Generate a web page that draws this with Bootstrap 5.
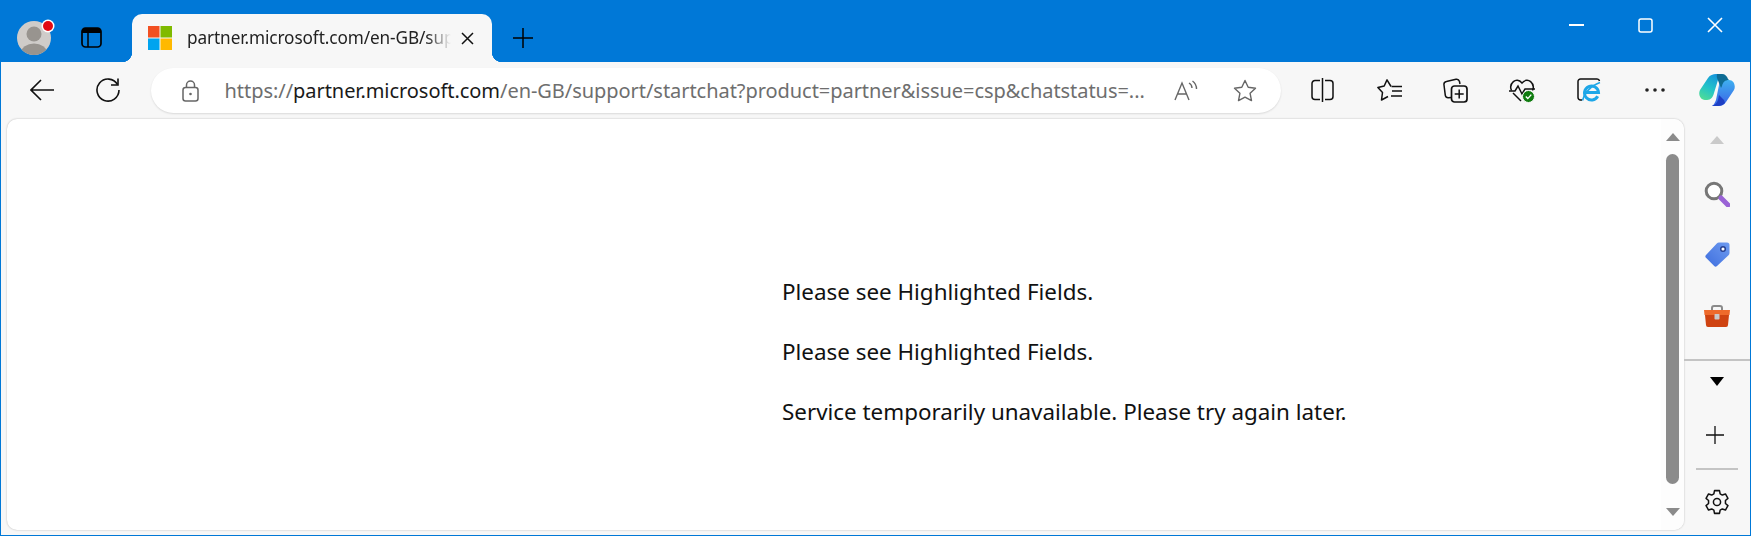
<!DOCTYPE html>
<html lang="en">
<head>
  <meta charset="UTF-8">
  <title>partner.microsoft.com</title>
  <link href="https://cdn.jsdelivr.net/npm/bootstrap@5.3.0/dist/css/bootstrap.min.css" rel="stylesheet">
  <style>
    html, body { height: 100%; background: #0078d7; overflow: hidden; }
    body { font-family: "Noto Sans", "Liberation Sans", sans-serif; color: #111; }
    svg { display: block; flex: none; }
    .browser-win { height: 536px; padding: 0 1px 1px 1px; }
    .tab-strip { height: 62px; flex: none; }
    .strip-left { width: 131px; padding: 0 0 0 16px; }
    .avatar-wrap { width: 42px; padding-top: 17px; }
    .tabs-btn { margin: 27px 0 0 22px; }
    .page-tab { position: relative; width: 360px; height: 48px; margin-top: 14px; background: #f7f7f7; border-radius: 10px 10px 0 0; padding-left: 16px; }
    .page-tab::before, .page-tab::after { content: ""; position: absolute; bottom: 0; width: 10px; height: 10px; }
    .page-tab::before { left: -10px; background: radial-gradient(circle at 0 0, #0078d7 10px, #f7f7f7 10.5px); }
    .page-tab::after { right: -10px; background: radial-gradient(circle at 100% 0, #0078d7 10px, #f7f7f7 10.5px); }
    .tab-title { width: 268px; margin-left: 15px; font-size: 17.2px; white-space: nowrap; color: #222; letter-spacing: -.1px;
      -webkit-mask-image: linear-gradient(to right, #000 240px, transparent 264px); mask-image: linear-gradient(to right, #000 240px, transparent 264px); }
    .tab-close { margin-left: 6px; }
    .new-tab { margin-left: 21px; margin-top: 14px; height: 48px; }
    .win-controls { margin-left: auto; height: 50px; }
    .win-btn { width: 69.5px; }
    .tool-bar { height: 56px; flex: none; background: #f7f7f7; padding-left: 8px; }
    .nav-slot { width: 66px; height: 56px; }
    .addr-bar { width: 1130px; height: 45px; margin-left: 10px; margin-top: 6px; margin-right: 8.5px; background: #fff; border-radius: 23px; box-shadow: 0 1px 2px rgba(0,0,0,.12); padding-left: 30.5px; }
    .addr-url { margin-left: 26px; width: 930px; font-size: 20px; white-space: nowrap; color: #6e6e6e; letter-spacing: -.05px; }
    .addr-url b { font-weight: 400; color: #1a1a1a; }
    .addr-read { margin-left: 19.5px; }
    .addr-star { margin-left: 33.5px; }
    .tool-slot { width: 66.5px; height: 56px; }
    .tool-slot-end { width: 56.5px; height: 56px; }
    .main-area { flex: 1 1 0; min-height: 0; background: #f7f7f7; }
    .page-pane { width: 1677px; margin: 1px 0 5px 6px; background: #fff; border-radius: 10px; box-shadow: 0 0 2px rgba(0,0,0,.28); }
    .page-body { padding: 143px 0 0 775px; font-size: 22.4px; color: #111; }
    .page-body p { margin: 0; line-height: 60px; }
    .scroll-col { width: 23px; padding: 14px 0 14px 0; background: #fdfdfd; border-radius: 0 10px 10px 0; }
    .scroll-thumb { width: 13px; flex: 1 1 0; margin: 13px 0 24px; background: #8b8b8b; border-radius: 7px; }
    .arr-up { width: 0; height: 0; border: 7.5px solid transparent; border-top: 0; border-bottom: 8px solid #8b8b8b; }
    .arr-down { width: 0; height: 0; border: 7.5px solid transparent; border-bottom: 0; border-top: 8px solid #8b8b8b; }
    .side-rail { width: 66px; }
    .rail-up { width: 0; height: 0; margin: 18px 0 19px; border: 7px solid transparent; border-top: 0; border-bottom: 8px solid #cacaca; }
    .rail-item { height: 61px; }
    .rail-line { height: 2px; background: #c4c4c4; align-self: stretch; margin-top: 13px; }
    .rail-down { width: 0; height: 0; margin: 16px 0 40px; border: 7px solid transparent; border-bottom: 0; border-top: 9px solid #000; }
    .rail-line-sm { height: 2px; width: 42px; background: #c4c4c4; margin: 24px 0 19px; }
  </style>
</head>
<body>
<div class="browser-win d-flex flex-column">

  <div class="tab-strip d-flex">
    <div class="strip-left d-flex">
      <div class="avatar-wrap">
        <svg width="42" height="40" viewBox="0 0 42 40">
          <defs><clipPath id="avClip"><circle cx="17" cy="21" r="17"/></clipPath></defs>
          <circle cx="17" cy="21" r="17" fill="#cfccc9"/>
          <g clip-path="url(#avClip)" fill="#98948f">
            <circle cx="17" cy="17" r="7.500"/>
            <ellipse cx="17" cy="36" rx="13" ry="9.500"/>
          </g>
          <circle cx="31" cy="9" r="6.500" fill="#fff"/>
          <circle cx="31" cy="9" r="5" fill="#e20a12"/>
        </svg>
      </div>
      <div class="tabs-btn">
        <svg width="21" height="21" viewBox="0 0 21 21"><rect x="1" y="1" width="19" height="19" rx="3.500" fill="none" stroke="#000" stroke-width="1.700"/><path d="M1 6V4.500A3.500 3.500 0 0 1 4.500 1h12A3.500 3.500 0 0 1 20 4.500V6z" fill="#000"/><path d="M7 6v14" stroke="#000" stroke-width="1.500"/></svg>
      </div>
    </div>
    <div class="page-tab d-flex align-items-center">
      <svg width="24" height="24" viewBox="0 0 24 24"><rect width="11.500" height="11.500" fill="#f25022"/><rect x="12.500" width="11.500" height="11.500" fill="#7fba00"/><rect y="12.500" width="11.500" height="11.500" fill="#00a4ef"/><rect x="12.500" y="12.500" width="11.500" height="11.500" fill="#ffb900"/></svg>
      <div class="tab-title">partner.microsoft.com/en-GB/sup</div>
      <svg class="tab-close" width="13" height="13" viewBox="0 0 13 13"><path d="M1 1l11 11M12 1L1 12" stroke="#111" stroke-width="1.500"/></svg>
    </div>
    <div class="new-tab d-flex align-items-center">
      <svg width="20" height="20" viewBox="0 0 20 20"><path d="M10 0v20M0 10h20" stroke="#000" stroke-width="1.500"/></svg>
    </div>
    <div class="win-controls d-flex">
      <div class="win-btn d-flex align-items-center justify-content-center"><svg width="15" height="2"><rect width="15" height="2" fill="#fff"/></svg></div>
      <div class="win-btn d-flex align-items-center justify-content-center"><svg width="15" height="15" viewBox="0 0 15 15"><rect x="1" y="1" width="13" height="13" rx="2" fill="none" stroke="#fff" stroke-width="1.500"/></svg></div>
      <div class="win-btn d-flex align-items-center justify-content-center"><svg width="16" height="16" viewBox="0 0 16 16"><path d="M1 1l14 14M15 1L1 15" stroke="#fff" stroke-width="1.600"/></svg></div>
    </div>
  </div>

  <div class="tool-bar d-flex">
    <div class="nav-slot d-flex align-items-center justify-content-center">
      <svg width="24" height="22" viewBox="0 0 24 22"><path d="M11 1L1 11l10 10M1 11h23" fill="none" stroke="#111" stroke-width="1.600"/></svg>
    </div>
    <div class="nav-slot d-flex align-items-center justify-content-center">
      <svg width="24" height="24" viewBox="0 0 24 24"><path d="M21.500 6.500A11 11 0 1 0 23 12" fill="none" stroke="#111" stroke-width="1.600"/><path d="M22 0.500v6.500h-7" fill="none" stroke="#111" stroke-width="1.600"/></svg>
    </div>
    <div class="addr-bar d-flex align-items-center">
      <svg width="17" height="22" viewBox="0 0 17 22"><rect x="1" y="7.500" width="15" height="13.500" rx="2.500" fill="none" stroke="#666" stroke-width="1.500"/><path d="M4.500 7.500V5a4 4 0 0 1 8 0v2.500" fill="none" stroke="#666" stroke-width="1.500"/><circle cx="8.500" cy="14" r="1.300" fill="#666"/></svg>
      <div class="addr-url">https://<b>partner.microsoft.com</b>/en-GB/support/startchat?product=partner&amp;issue=csp&amp;chatstatus=...</div>
      <div class="addr-read">
        <svg width="25" height="22" viewBox="0 0 25 22"><path d="M1 20L8 3l7 17M3.500 14h9" fill="none" stroke="#666" stroke-width="1.400"/><path d="M15 3a6 6 0 0 1 3 5M18.500 1a10 10 0 0 1 4 8" fill="none" stroke="#666" stroke-width="1.400"/></svg>
      </div>
      <div class="addr-star">
        <svg width="24" height="23" viewBox="0 0 24 23"><path d="M12 1.500l3.200 6.800 7.300.9-5.400 5.100 1.400 7.300L12 18.100l-6.500 3.500 1.400-7.300L1.500 9.200l7.300-.9z" fill="none" stroke="#666" stroke-width="1.400" stroke-linejoin="round"/></svg>
      </div>
    </div>
    <div class="tool-slot d-flex align-items-center justify-content-center">
      <svg width="23" height="24" viewBox="0 0 23 24"><path d="M9 2.500H4A3 3 0 0 0 1 5.500v13a3 3 0 0 0 3 3h5M14 2.500h5a3 3 0 0 1 3 3v13a3 3 0 0 1-3 3h-5" fill="none" stroke="#111" stroke-width="1.500"/><path d="M11.500 0v24" stroke="#111" stroke-width="1.500"/></svg>
    </div>
    <div class="tool-slot d-flex align-items-center justify-content-center">
      <svg width="25" height="23" viewBox="0 0 25 23"><path d="M14 7.500L10 .9 7.200 7 .9 8.500l4.600 5-1 7.500 6.500-3.500" fill="none" stroke="#111" stroke-width="1.500" stroke-linejoin="round"/><path d="M14.500 7.500H25M15 12h10M14 17h11" stroke="#111" stroke-width="1.500"/></svg>
    </div>
    <div class="tool-slot d-flex align-items-center justify-content-center">
      <svg width="25" height="25" viewBox="0 0 25 25"><path d="M8 19.500l-2.500.2a3 3 0 0 1-3.200-2.400L1 7a3 3 0 0 1 2.400-3.400L13 1.300a3 3 0 0 1 3.400 2L17 6" fill="none" stroke="#111" stroke-width="1.500"/><rect x="8.500" y="8" width="15.500" height="16" rx="3" fill="#f7f7f7" stroke="#111" stroke-width="1.700"/><path d="M16.200 11.500v9M11.700 16h9" stroke="#111" stroke-width="1.500"/></svg>
    </div>
    <div class="tool-slot d-flex align-items-center justify-content-center">
      <svg width="26" height="25" viewBox="0 0 26 25"><path d="M4 15l8 8M2.500 12.500C-.5 6 7-2 13 5c6-7 13.500 1 10.500 7.500" fill="none" stroke="#111" stroke-width="1.500"/><path d="M0 13h6l3-5 4 8 3-5h10" fill="none" stroke="#111" stroke-width="1.500"/><circle cx="19.500" cy="18.500" r="6" fill="#107c10" stroke="#f7f7f7" stroke-width="1"/><path d="M16.800 18.600l2 2 3.500-4" fill="none" stroke="#fff" stroke-width="1.400"/></svg>
    </div>
    <div class="tool-slot d-flex align-items-center justify-content-center">
      <svg width="24" height="24" viewBox="0 0 24 24"><path d="M5 22H3.500A2.500 2.500 0 0 1 1 19.500v-16A2.500 2.500 0 0 1 3.500 1H20a2.500 2.500 0 0 1 2.500 2" fill="none" stroke="#111" stroke-width="1.500"/><path d="M8.500 14.500h13a7 7 0 1 0-.8 3.800" fill="none" stroke="#1ea7e8" stroke-width="3"/><path d="M5.500 22.500C7 16 13 8 23 4.500" fill="none" stroke="#1ea7e8" stroke-width="1.600"/></svg>
    </div>
    <div class="tool-slot d-flex align-items-center justify-content-center">
      <svg width="20" height="4" viewBox="0 0 20 4"><circle cx="2" cy="2" r="1.800" fill="#222"/><circle cx="10" cy="2" r="1.800" fill="#222"/><circle cx="18" cy="2" r="1.800" fill="#222"/></svg>
    </div>
    <div class="tool-slot-end d-flex align-items-center justify-content-center">
      <svg width="36" height="32" viewBox="0 0 36 32">
        <defs>
          <linearGradient id="cpA" x1=".7" y1="0" x2=".2" y2="1"><stop offset="0" stop-color="#1493dc"/><stop offset=".55" stop-color="#22c3c8"/><stop offset="1" stop-color="#4fdc96"/></linearGradient>
          <linearGradient id="cpB" x1=".5" y1="0" x2=".5" y2="1"><stop offset="0" stop-color="#3fb0f0"/><stop offset="1" stop-color="#3a63e6"/></linearGradient>
        </defs>
        <path d="M21 6h9c5 0 7 6 5 10l-8 12c-2 3-5 4-8 4h-6c2-1 3-4 4-6z" fill="url(#cpB)"/>
        <path d="M17 0h7c-2 1-4 3-5 6l-4 13c-1 4-3 7-7 7H6C1 26-1 20 1 16L9 4c2-3 5-4 8-4z" fill="url(#cpA)"/>
        <path d="M18 0h5c3 0 5 2 6 5l1 1c-4 0-6 2-7 6l-1 2-4-10c-.5-2 0-3 0-4z" fill="#0f6c94"/>
        <path d="M13 32c3-1 5-3 6-6l1-5 5 5 1 3c-2 2-4 3-7 3z" fill="#1d3fc4"/>
      </svg>
    </div>
  </div>

  <div class="main-area d-flex">
    <div class="page-pane d-flex">
      <div class="page-body flex-grow-1">
        <p>Please see Highlighted Fields.</p>
        <p>Please see Highlighted Fields.</p>
        <p>Service temporarily unavailable. Please try again later.</p>
      </div>
      <div class="scroll-col d-flex flex-column align-items-center">
        <div class="arr-up"></div>
        <div class="scroll-thumb"></div>
        <div class="arr-down"></div>
      </div>
    </div>
    <div class="side-rail d-flex flex-column align-items-center">
      <div class="rail-up"></div>
      <div class="rail-item d-flex align-items-center justify-content-center">
        <svg width="26" height="26" viewBox="0 0 26 26"><circle cx="10" cy="10" r="7.800" fill="#fff" stroke="#777" stroke-width="3"/><path d="M17 17l7 7" stroke="#9a63d6" stroke-width="5" stroke-linecap="round"/></svg>
      </div>
      <div class="rail-item d-flex align-items-center justify-content-center">
        <svg width="25" height="25" viewBox="0 0 25 25"><defs><linearGradient id="tagG" x1="1" y1="0" x2="0" y2="1"><stop offset="0" stop-color="#6e9bf0"/><stop offset="1" stop-color="#3e6ede"/></linearGradient></defs><path d="M14 .5h8A2.500 2.500 0 0 1 24.500 3v8a3 3 0 0 1-1 2.200L12 24a2 2 0 0 1-2.800 0L1 15.800a2 2 0 0 1 0-2.800L11.800 1.500A3 3 0 0 1 14 .5z" fill="url(#tagG)"/><circle cx="18" cy="7" r="2.300" fill="#fff" stroke="#27408f" stroke-width="1.500"/></svg>
      </div>
      <div class="rail-item d-flex align-items-center justify-content-center">
        <svg width="28" height="22" viewBox="0 0 28 22"><path d="M9 6V3a2 2 0 0 1 2-2h6a2 2 0 0 1 2 2v3" fill="none" stroke="#8a8a8a" stroke-width="2"/><path d="M1 5h26l-.5 5H1.500z" fill="#ee6a2b"/><path d="M2 10h24l-1 10a2 2 0 0 1-2 2H5a2 2 0 0 1-2-2z" fill="#cf4311"/><rect x="11.500" y="9" width="5" height="5.500" rx=".8" fill="#c9c9c9"/></svg>
      </div>
      <div class="rail-line"></div>
      <div class="rail-down"></div>
      <svg width="18" height="18" viewBox="0 0 18 18" class="me-1"><path d="M9 0v18M0 9h18" stroke="#111" stroke-width="1.300"/></svg>
      <div class="rail-line-sm"></div>
      <svg width="26" height="26" viewBox="0 0 24 24"><path d="M9.700 1.500h4.600l.6 3 2 1.100 2.900-1 2.300 4-2.300 2v2.800l2.300 2-2.300 4-2.900-1-2 1.100-.6 3H9.700l-.6-3-2-1.100-2.900 1-2.300-4 2.300-2v-2.800l-2.300-2 2.300-4 2.900 1 2-1.100z" fill="none" stroke="#111" stroke-width="1.400" stroke-linejoin="round"/><circle cx="12" cy="12" r="3.300" fill="none" stroke="#111" stroke-width="1.400"/></svg>
    </div>
  </div>

</div>
</body>
</html>
